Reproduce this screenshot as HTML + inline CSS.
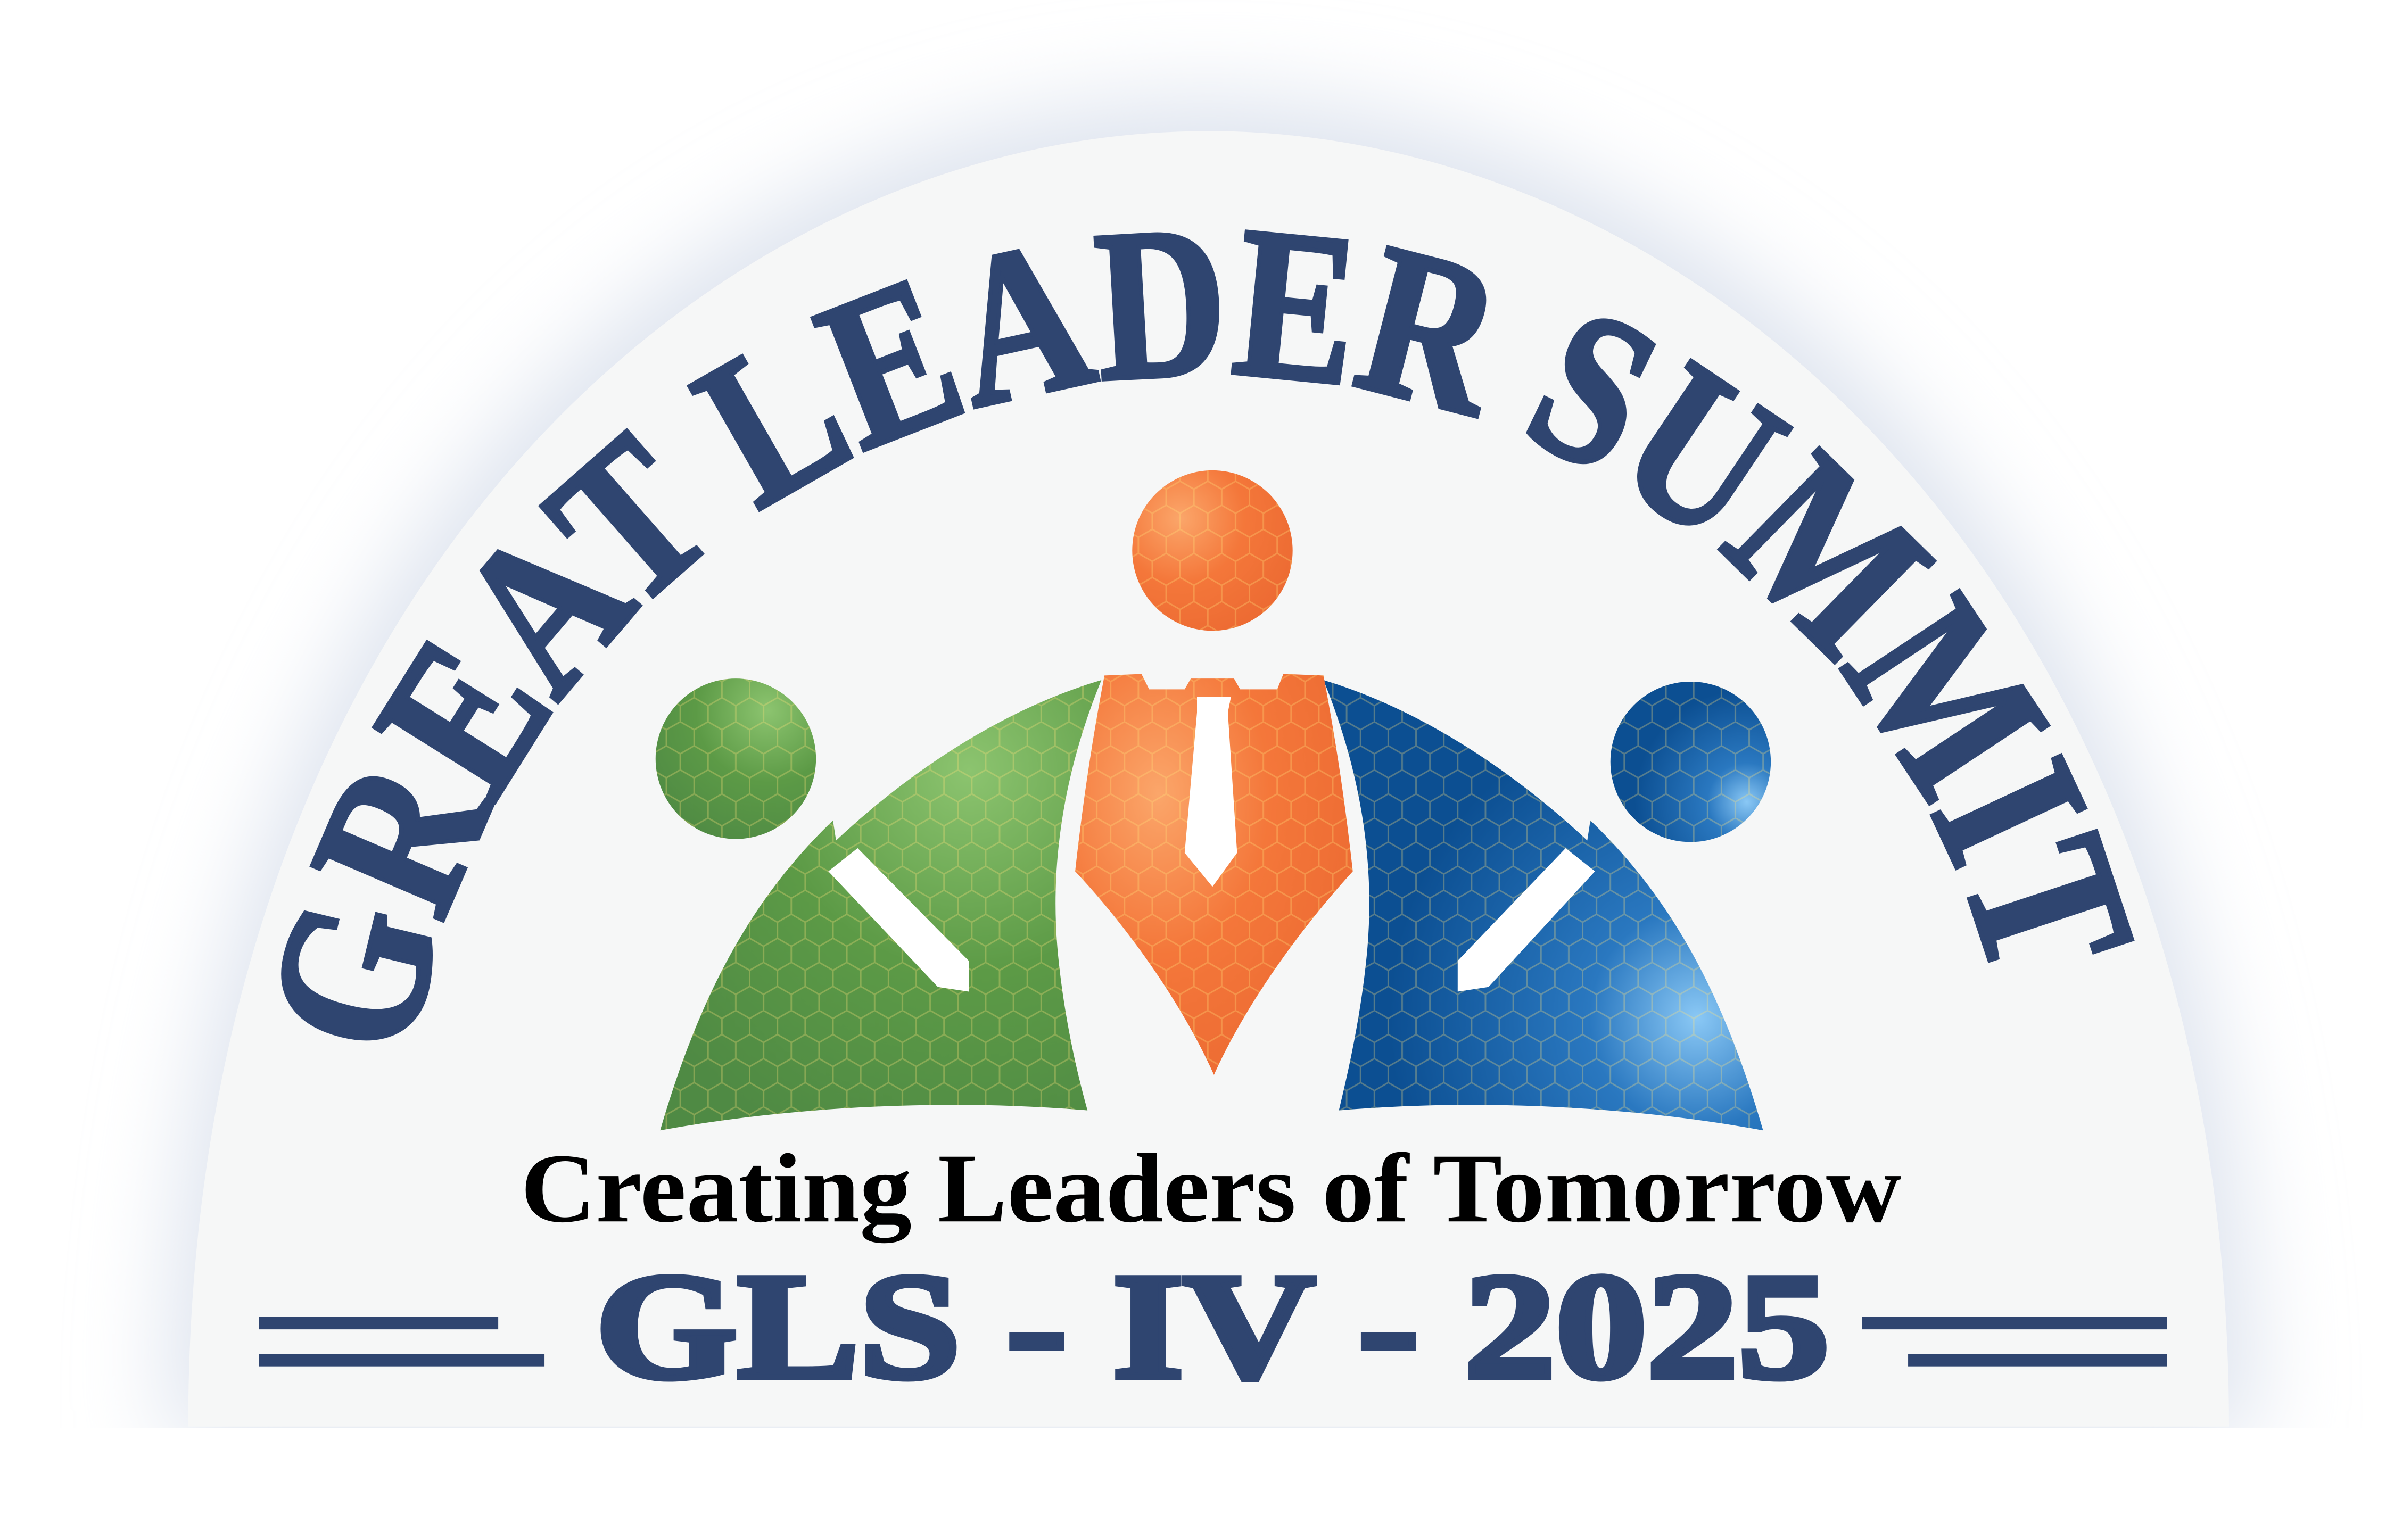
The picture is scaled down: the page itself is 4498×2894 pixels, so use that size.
<!DOCTYPE html>
<html><head><meta charset="utf-8"><style>html,body{margin:0;padding:0;background:#fff}svg{display:block}</style></head>
<body>
<svg width="4498" height="2894" viewBox="0 0 1552 998.6" preserveAspectRatio="none" xmlns="http://www.w3.org/2000/svg">
<defs>
<filter id="glow" x="-20%" y="-20%" width="140%" height="140%"><feGaussianBlur stdDeviation="30"/></filter>
<radialGradient id="gOr" cx="0.3" cy="0.3" r="0.8"><stop offset="0" stop-color="#fba66a"/><stop offset="0.5" stop-color="#f4773a"/><stop offset="1" stop-color="#ec6a32"/></radialGradient>
<radialGradient id="gGr" cx="0.7" cy="0.2" r="0.9"><stop offset="0" stop-color="#8cc46f"/><stop offset="0.5" stop-color="#5c9a46"/><stop offset="1" stop-color="#4f8a44"/></radialGradient>
<radialGradient id="gBl" cx="0.85" cy="0.75" r="0.7"><stop offset="0" stop-color="#8ac8f5"/><stop offset="0.35" stop-color="#2a78c0"/><stop offset="1" stop-color="#0c4f92"/></radialGradient>
<pattern id="hex" width="18" height="31.2" patternUnits="userSpaceOnUse">
<path d="M0,5.2 L9,0 L18,5.2 M0,5.2 L0,15.6 L9,20.8 L18,15.6 L18,5.2 M9,20.8 L9,31.2" fill="none" stroke="#ffe27a" stroke-opacity="0.3" stroke-width="1"/>
</pattern>
<path id="arc" d="M266,688 A525,525 0 0,1 1297,652"/>
</defs>
<rect width="1552" height="998.6" fill="#fff"/>
<path d="M110,935 C110,380 440,65 783,65 C1126,65 1460,380 1460,935 Z" fill="#dde3ee" filter="url(#glow)"/>
<rect x="0" y="926" width="1552" height="80" fill="#fff"/>
<path d="M122,925 C122,400 450,85 783,85 C1116,85 1445,400 1445,925 Z" fill="#f6f7f7"/>

<text font-family="'Liberation Serif',serif" font-weight="bold" font-size="140" fill="#2f4570" stroke="#2f4570" stroke-width="3"><textPath href="#arc" textLength="1440" lengthAdjust="spacingAndGlyphs">GREAT LEADER SUMMIT</textPath></text>

<circle cx="786" cy="357" r="52" fill="url(#gOr)"/><circle cx="786" cy="357" r="52" fill="url(#hex)"/>
<circle cx="477" cy="492" r="52" fill="url(#gGr)"/><circle cx="477" cy="492" r="52" fill="url(#hex)"/>
<circle cx="1096" cy="494" r="52" fill="url(#gBl)"/><circle cx="1096" cy="494" r="52" fill="url(#hex)"/>

<g>
<path d="M428,733 C455,640 490,580 540,532 L542,545 C590,500 650,460 714,441 C690,500 680,560 686,620 C690,660 698,695 705,720 C610,712 510,718 428,733 Z" fill="url(#gGr)"/>
<path d="M428,733 C455,640 490,580 540,532 L542,545 C590,500 650,460 714,441 C690,500 680,560 686,620 C690,660 698,695 705,720 C610,712 510,718 428,733 Z" fill="url(#hex)"/>
<path d="M537,565 L556,550 L628,623 L628,643 L608,640 Z" fill="#fff"/>
</g>
<g>
<path d="M1143,733 C1116,640 1081,580 1031,532 L1029,545 C981,500 921,460 858,441 C882,500 892,560 886,620 C882,660 874,695 868,720 C962,712 1062,718 1143,733 Z" fill="url(#gBl)"/>
<path d="M1143,733 C1116,640 1081,580 1031,532 L1029,545 C981,500 921,460 858,441 C882,500 892,560 886,620 C882,660 874,695 868,720 C962,712 1062,718 1143,733 Z" fill="url(#hex)"/>
<path d="M1034,565 L1015,550 L945,623 L945,643 L965,640 Z" fill="#fff"/>
</g>
<g>
<path d="M716,438 L740,437 L745,447 L768,447 L772,440 L800,440 L804,447 L828,447 L832,437 L858,438 C866,480 872,520 877,565 C845,600 808,650 787,697 C766,650 730,600 697,565 C702,520 708,480 716,438 Z" fill="url(#gOr)"/>
<path d="M716,438 L740,437 L745,447 L768,447 L772,440 L800,440 L804,447 L828,447 L832,437 L858,438 C866,480 872,520 877,565 C845,600 808,650 787,697 C766,650 730,600 697,565 C702,520 708,480 716,438 Z" fill="url(#hex)"/>
<path d="M776,452 L798,452 L796,462 L802,553 L786,575 L768,553 L776,462 Z" fill="#fff"/>
</g>

<text x="785" y="792" text-anchor="middle" font-family="'Liberation Serif',serif" font-weight="bold" font-size="64" fill="#000" textLength="895" lengthAdjust="spacingAndGlyphs">Creating Leaders of Tomorrow</text>
<text x="786" y="893" text-anchor="middle" font-family="'Liberation Serif',serif" font-weight="bold" font-size="98" fill="#2f4570" stroke="#2f4570" stroke-width="4" textLength="800" lengthAdjust="spacingAndGlyphs">GLS - IV - 2025</text>
<rect x="168" y="854" width="155" height="8" fill="#2f4570"/>
<rect x="168" y="878" width="185" height="8" fill="#2f4570"/>
<rect x="1207" y="854" width="198" height="8" fill="#2f4570"/>
<rect x="1237" y="878" width="168" height="8" fill="#2f4570"/>
</svg>
</body></html>
